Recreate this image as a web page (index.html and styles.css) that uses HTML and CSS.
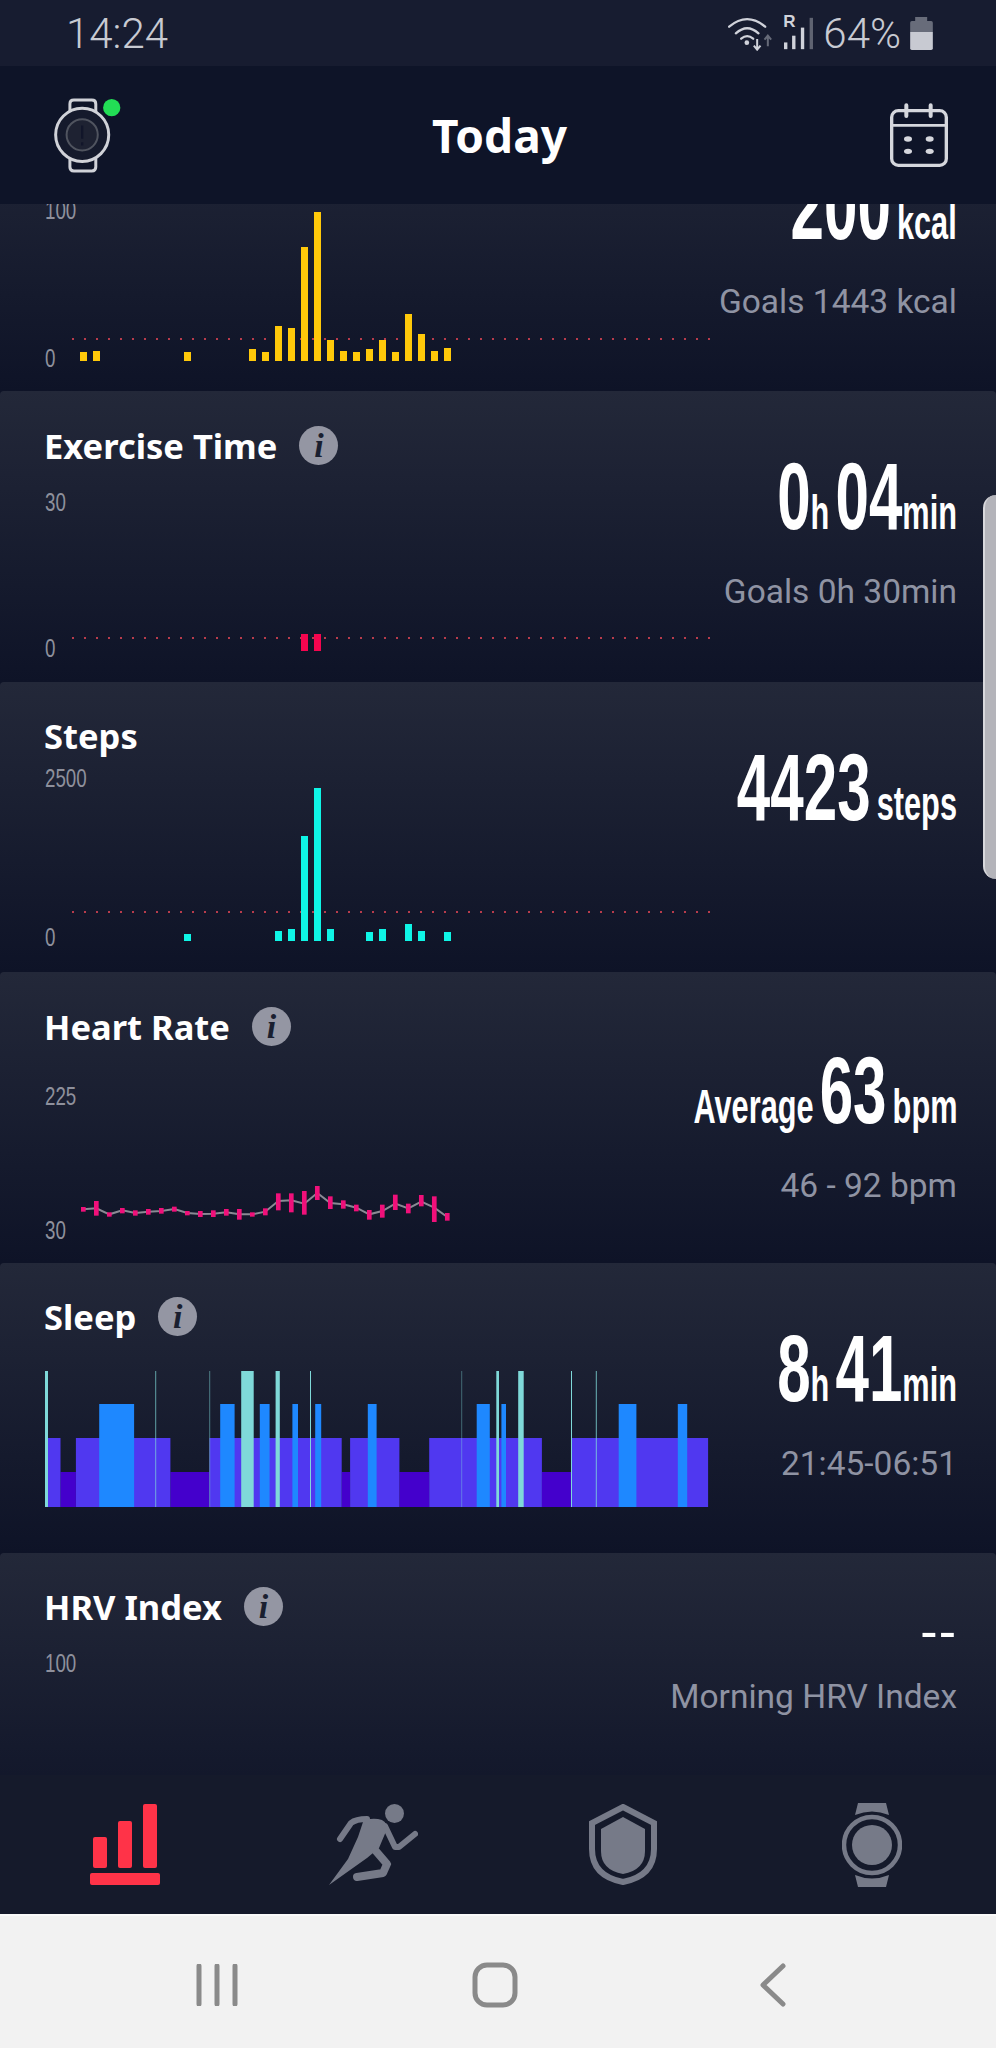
FILE: index.html
```html
<!DOCTYPE html>
<html lang="en">
<head>
  <meta charset="UTF-8" />
  <meta name="viewport" content="width=device-width, initial-scale=1.0" />
  <title>Today</title>
  <link rel="stylesheet" href="styles.css">
</head>
<body>
  <div class="app">
    <div class="status-bar">
      <span class="status-text">14:24</span>
      <div class="status-icons">
        <svg class="wifi-icon" viewBox="80 45 140 105">
          <g fill="none" stroke="#d0d2da" stroke-width="7" stroke-linecap="round">
            <path d="M86 77 Q140 32 194 77" />
            <path d="M106 97 Q140 66 174 97" />
            <path d="M122 113 Q140 98 158 113" />
          </g>
          <circle cx="139" cy="125" r="7" fill="#d0d2da" />
          <path d="M170 114 V144 M160 134 L170 146 L180 134" fill="none" stroke="#d0d2da" stroke-width="6" />
          <path d="M202 136 V108 M192 116 L202 104 L212 116" fill="none" stroke="#666a78" stroke-width="6" />
        </svg>
        <div class="signal">
          <span class="roaming">R</span>
          <svg class="signal-icon" viewBox="238 50 92 100">
            <rect x="241" y="128" width="10" height="20" fill="#d0d2da" />
            <rect x="265" y="108" width="10" height="40" fill="#d0d2da" />
            <rect x="291" y="84" width="10" height="64" fill="#d0d2da" />
            <rect x="317" y="55" width="10" height="93" fill="#5f6371" />
          </svg>
        </div>
        <span class="status-text">64%</span>
        <svg class="battery-icon" viewBox="625 50 68 99">
          <path d="M640 50 H676 V62 H688 Q693 62 693 67 V95 H625 V67 Q625 62 630 62 H640 Z" fill="#686c7a" />
          <path d="M625 95 H693 V144 Q693 149 688 149 H630 Q625 149 625 144 Z" fill="#c8cad2" />
        </svg>
      </div>
    </div>

    <div class="top-bar">
      <svg class="watch-icon" viewBox="90 70 220 250">
        <path d="M150 125 V100 Q150 88 162 88 H216 Q228 88 228 100 V125" fill="none" stroke="#d0d2d8" stroke-width="9" />
        <path d="M150 262 V290 Q150 302 162 302 H216 Q228 302 228 290 V262" fill="none" stroke="#d0d2d8" stroke-width="9" />
        <circle cx="187" cy="193" r="80" fill="#151a2c" stroke="#d0d2d8" stroke-width="9" />
        <circle cx="187" cy="193" r="47" fill="#1e2232" stroke="#50545f" stroke-width="6" />
        <path d="M187 165 V205 M187 215 V225" stroke="#12162a" stroke-width="7" />
        <circle cx="276" cy="111" r="26" fill="#22dd55" />
      </svg>
      <h1 class="page-title">Today</h1>
      <svg class="calendar-icon" viewBox="570 305 180 195">
        <rect x="578" y="328" width="164" height="164" rx="20" fill="none" stroke="#d5d7dd" stroke-width="10" />
        <path d="M578 372 H742" stroke="#d5d7dd" stroke-width="8" />
        <path d="M622 312 V344 M695 312 V344" stroke="#d5d7dd" stroke-width="12" stroke-linecap="round" />
        <ellipse cx="627" cy="413" rx="12" ry="8" fill="#d5d7dd" />
        <ellipse cx="692" cy="413" rx="12" ry="8" fill="#d5d7dd" />
        <ellipse cx="627" cy="450" rx="12" ry="8" fill="#d5d7dd" />
        <ellipse cx="692" cy="450" rx="12" ry="8" fill="#d5d7dd" />
      </svg>
    </div>

    <div class="scroll-area">
      <div class="cards">

        <!-- first card is scrolled under the header, its title is out of view -->
        <section class="card card-first">
          <div class="card-left">
            <div class="card-title"></div>
            <svg class="chart" viewBox="45 76 668 214">
              <text class="axis" x="45" y="118">100</text>
              <text class="axis" x="45" y="266">0</text>
              <line class="goal" x1="72" x2="710" y1="238" y2="238" />
              <g fill="#ffc90a">
                <rect x="80" y="251" width="7" height="9" />
                <rect x="93" y="250" width="7" height="10" />
                <rect x="184" y="251" width="7" height="9" />
                <rect x="249" y="248" width="7" height="12" />
                <rect x="262" y="251" width="7" height="9" />
                <rect x="275" y="225" width="7" height="35" />
                <rect x="288" y="227" width="7" height="33" />
                <rect x="301" y="146" width="7" height="114" />
                <rect x="314" y="111" width="7" height="149" />
                <rect x="327" y="239" width="7" height="21" />
                <rect x="340" y="250" width="7" height="10" />
                <rect x="353" y="251" width="7" height="9" />
                <rect x="366" y="248" width="7" height="12" />
                <rect x="379" y="239" width="7" height="21" />
                <rect x="392" y="251" width="7" height="9" />
                <rect x="405" y="213" width="7" height="47" />
                <rect x="418" y="233" width="7" height="27" />
                <rect x="431" y="250" width="7" height="10" />
                <rect x="444" y="247" width="7" height="13" />
              </g>
            </svg>
          </div>
          <div class="card-right">
            <div class="value"><span class="num">200</span> <span class="unit">kcal</span></div>
            <div class="sub">Goals 1443 kcal</div>
          </div>
        </section>

        <section class="card">
          <div class="card-left">
            <div class="card-title"><h2>Exercise Time</h2><span class="info">i</span></div>
            <svg class="chart" viewBox="45 76 668 214">
              <text class="axis" x="45" y="120">30</text>
              <text class="axis" x="45" y="266">0</text>
              <line class="goal" x1="72" x2="710" y1="247" y2="247" />
              <g fill="#f5054f">
                <rect x="301" y="243" width="7" height="17" />
                <rect x="314" y="243" width="7" height="17" />
              </g>
            </svg>
          </div>
          <div class="card-right">
            <div class="value"><span class="num">0</span><span class="unit">h</span> <span class="num">04</span><span class="unit">min</span></div>
            <div class="sub">Goals 0h 30min</div>
          </div>
        </section>

        <section class="card">
          <div class="card-left">
            <div class="card-title"><h2>Steps</h2></div>
            <svg class="chart" viewBox="45 76 668 214">
              <text class="axis" x="45" y="105">2500</text>
              <text class="axis" x="45" y="264">0</text>
              <line class="goal" x1="72" x2="710" y1="230" y2="230" />
              <g fill="#0ff5e6">
                <rect x="184" y="252" width="7" height="7" />
                <rect x="275" y="249" width="7" height="10" />
                <rect x="288" y="247" width="7" height="12" />
                <rect x="301" y="154" width="7" height="105" />
                <rect x="314" y="106" width="7" height="153" />
                <rect x="327" y="247" width="7" height="12" />
                <rect x="366" y="250" width="7" height="9" />
                <rect x="379" y="247" width="7" height="12" />
                <rect x="405" y="242" width="7" height="17" />
                <rect x="418" y="249" width="7" height="10" />
                <rect x="444" y="250" width="7" height="9" />
              </g>
            </svg>
          </div>
          <div class="card-right">
            <div class="value"><span class="num">4423</span> <span class="unit">steps</span></div>
          </div>
        </section>

        <section class="card">
          <div class="card-left">
            <div class="card-title"><h2>Heart Rate</h2><span class="info">i</span></div>
            <svg class="chart" viewBox="45 76 668 214">
              <text class="axis" x="45" y="133">225</text>
              <text class="axis" x="45" y="267">30</text>
              <!-- drawn at 3x, scaled down to the chart -->
              <g transform="translate(60 209) scale(0.3333)">
                <polyline class="hr-line" points="70,85 109,82 148,100 187,88 226,96 265,92 304,90 343,84 382,96 421,99 460,98 499,94 538,100 577,100 616,92 655,60 694,58 733,68 772,36 811,66 850,70 889,80 928,100 967,90 1006,68 1045,82 1084,62 1123,80 1162,108" />
                <g fill="#f0107a">
                  <rect x="63" y="78" width="14" height="14" />
                  <rect x="102" y="60" width="14" height="44" />
                  <rect x="141" y="94" width="14" height="13" />
                  <rect x="180" y="81" width="14" height="16" />
                  <rect x="219" y="88" width="14" height="16" />
                  <rect x="258" y="84" width="14" height="17" />
                  <rect x="297" y="81" width="14" height="17" />
                  <rect x="336" y="77" width="14" height="15" />
                  <rect x="375" y="90" width="14" height="13" />
                  <rect x="414" y="90" width="14" height="18" />
                  <rect x="453" y="88" width="14" height="20" />
                  <rect x="492" y="84" width="14" height="20" />
                  <rect x="531" y="84" width="14" height="32" />
                  <rect x="570" y="94" width="14" height="13" />
                  <rect x="609" y="82" width="14" height="21" />
                  <rect x="648" y="37" width="14" height="51" />
                  <rect x="687" y="37" width="14" height="57" />
                  <rect x="726" y="30" width="14" height="71" />
                  <rect x="765" y="15" width="14" height="42" />
                  <rect x="804" y="46" width="14" height="38" />
                  <rect x="843" y="58" width="14" height="25" />
                  <rect x="882" y="71" width="14" height="20" />
                  <rect x="921" y="87" width="14" height="29" />
                  <rect x="960" y="71" width="14" height="39" />
                  <rect x="999" y="41" width="14" height="46" />
                  <rect x="1038" y="68" width="14" height="29" />
                  <rect x="1077" y="42" width="14" height="34" />
                  <rect x="1116" y="46" width="14" height="77" />
                  <rect x="1155" y="96" width="14" height="23" />
                </g>
              </g>
            </svg>
          </div>
          <div class="card-right card-right-low">
            <div class="value"><span class="unit">Average</span> <span class="num">63</span> <span class="unit">bpm</span></div>
            <div class="sub">46 - 92 bpm</div>
          </div>
        </section>

        <section class="card">
          <div class="card-left">
            <div class="card-title"><h2>Sleep</h2><span class="info">i</span></div>
            <svg class="chart" viewBox="45 76 668 214">
              <g fill="#4400cc">
                <rect x="60.5" y="209" width="15.4" height="35" />
                <rect x="170.4" y="209" width="39.1" height="35" />
                <rect x="341.7" y="209" width="8.4" height="35" />
                <rect x="399.4" y="209" width="29.8" height="35" />
                <rect x="541.9" y="209" width="29.3" height="35" />
              </g>
              <g fill="#5038f0">
                <rect x="44.2" y="175" width="16.3" height="69" />
                <rect x="75.9" y="175" width="94.5" height="69" />
                <rect x="209.5" y="175" width="132.2" height="69" />
                <rect x="350.1" y="175" width="49.3" height="69" />
                <rect x="429.2" y="175" width="112.7" height="69" />
                <rect x="571.2" y="175" width="136.9" height="69" />
              </g>
              <g fill="#1e88ff">
                <rect x="99.2" y="141" width="34.9" height="103" />
                <rect x="220.2" y="141" width="14.4" height="103" />
                <rect x="259.8" y="141" width="9.8" height="103" />
                <rect x="292.4" y="141" width="5.6" height="103" />
                <rect x="315.2" y="141" width="6" height="103" />
                <rect x="367.8" y="141" width="8.8" height="103" />
                <rect x="476.7" y="141" width="13.1" height="103" />
                <rect x="501.4" y="141" width="4.6" height="103" />
                <rect x="618.7" y="141" width="17.7" height="103" />
                <rect x="677.8" y="141" width="9.4" height="103" />
              </g>
              <g fill="#7fd9d9">
                <rect x="44.2" y="108" width="3.8" height="136" />
                <rect x="241.2" y="108" width="12.5" height="136" />
                <rect x="275.6" y="108" width="4.2" height="136" />
                <rect x="496.3" y="108" width="2.7" height="136" />
                <rect x="518.2" y="108" width="5.5" height="136" />
                <rect x="155.2" y="108" width="1" height="136" opacity="0.7" />
                <rect x="209.2" y="108" width="1" height="136" opacity="0.5" />
                <rect x="310" y="108" width="1" height="136" />
                <rect x="461.2" y="108" width="1" height="136" opacity="0.4" />
                <rect x="571" y="108" width="1" height="136" />
                <rect x="595.8" y="108" width="1" height="136" opacity="0.8" />
              </g>
            </svg>
          </div>
          <div class="card-right">
            <div class="value"><span class="num">8</span><span class="unit">h</span> <span class="num">41</span><span class="unit">min</span></div>
            <div class="sub">21:45-06:51</div>
          </div>
        </section>

        <section class="card">
          <div class="card-left">
            <div class="card-title"><h2>HRV Index</h2><span class="info">i</span></div>
            <svg class="chart" viewBox="45 76 668 214">
              <text class="axis" x="45" y="119">100</text>
            </svg>
          </div>
          <div class="card-right card-right-empty">
            <div class="value value-small">--</div>
            <div class="sub">Morning HRV Index</div>
          </div>
        </section>

      </div>
      <div class="scroll-thumb"></div>
    </div>

    <nav class="tab-bar">
      <svg class="tab-icon" viewBox="0 0 70 81" width="70" height="81">
        <g fill="#ff3348">
          <rect x="3" y="33" width="14" height="31" rx="2" />
          <rect x="28" y="17" width="14" height="47" rx="2" />
          <rect x="53" y="0" width="14" height="64" rx="2" />
          <rect x="0" y="69" width="70" height="12" rx="2" />
        </g>
      </svg>
      <svg class="tab-icon" viewBox="0 0 89 81" width="89" height="81">
        <g fill="#767a88">
          <ellipse cx="65.5" cy="9.5" rx="9.5" ry="9.5" />
          <path d="M0 81 L19 55 L29 33 L34 18 Q38 14 49 15 Q58 16 58 25 L50 44 L38 54 Z" />
        </g>
        <g fill="none" stroke="#767a88" stroke-linejoin="round" stroke-linecap="round">
          <path d="M11 35 L22 19 Q27 15 38 15" stroke-width="6" />
          <path d="M46 46 L58 60 L54 69 L28 73" stroke-width="8" />
          <path d="M56 22 L66 43 L70 43 L86 30" stroke-width="6" />
        </g>
      </svg>
      <svg class="tab-icon" viewBox="0 0 68 81" width="68" height="81">
        <path d="M34 3 L65 19 V45 Q65 72 34 78 Q3 72 3 45 V19 Z" fill="none" stroke="#767a88" stroke-width="6" />
        <path d="M34 13 L56 25 V47 Q56 66 34 70 Q12 66 12 47 V25 Z" fill="#767a88" />
      </svg>
      <svg class="tab-icon" viewBox="0 0 60 84" width="60" height="84">
        <path d="M16 0 H44 L47 12 Q30 5 13 12 Z" fill="#767a88" />
        <path d="M13 72 Q30 79 47 72 L44 84 H16 Z" fill="#767a88" />
        <circle cx="30" cy="42" r="28" fill="none" stroke="#767a88" stroke-width="4.5" />
        <circle cx="30" cy="42" r="20" fill="#767a88" />
      </svg>
    </nav>

    <div class="system-bar">
      <svg viewBox="0 0 42 42" width="42" height="42">
        <path d="M3 2 V40 M21 2 V40 M39 2 V40" stroke="#8a8a8a" stroke-width="5" stroke-linecap="round" />
      </svg>
      <svg viewBox="0 0 46 46" width="46" height="46">
        <rect x="3" y="3" width="40" height="40" rx="12" fill="none" stroke="#8a8a8a" stroke-width="5" />
      </svg>
      <svg viewBox="0 0 26 44" width="26" height="44">
        <path d="M23 3 L3 22 L23 41" fill="none" stroke="#8a8a8a" stroke-width="5" stroke-linecap="round" stroke-linejoin="round" />
      </svg>
    </div>
  </div>
</body>
</html>
```

FILE: styles.css
```css
* {
  box-sizing: border-box;
}

html,
body {
  margin: 0;
  padding: 0;
  background-color: #0e1327;
}

.app {
  display: flex;
  flex-direction: column;
  width: 996px;
  height: 2048px;
  overflow: hidden;
  font-family: "Noto Sans", sans-serif;
}

/* status bar */
.status-bar {
  flex: 0 0 66px;
  display: flex;
  justify-content: space-between;
  align-items: center;
  padding: 0 63px 0 66px;
  background-color: #171c30;
}

.status-text {
  font-family: Roboto, sans-serif;
  font-size: 42px;
  font-weight: 300;
  color: #c8cad2;
}

.status-icons {
  display: flex;
  align-items: center;
  gap: 9px;
}

.wifi-icon {
  width: 47px;
  height: 35px;
}

.signal {
  position: relative;
  width: 31px;
  height: 34px;
}

.signal-icon {
  width: 31px;
  height: 34px;
}

.roaming {
  position: absolute;
  top: -4px;
  left: 0;
  font-family: "Liberation Sans", sans-serif;
  font-size: 17px;
  font-weight: 700;
  color: #d0d2da;
}

.battery-icon {
  width: 23px;
  height: 33px;
}

/* header */
.top-bar {
  flex: 0 0 138px;
  display: grid;
  grid-template-columns: 1fr auto 1fr;
  align-items: center;
  padding: 0 47px 0 50px;
  background-color: #0e1428;
}

.watch-icon {
  width: 73px;
  height: 83px;
}

.calendar-icon {
  justify-self: end;
  width: 60px;
  height: 65px;
}

.page-title {
  margin: 0;
  font-size: 46px;
  font-weight: 700;
  color: #fff;
}

/* cards */
.scroll-area {
  position: relative;
  flex: 0 0 1571px;
  overflow: hidden;
}

.card {
  display: flex;
  height: 290.4px;
  background: linear-gradient(#232839, #0e1327);
  border-radius: 4px 4px 0 0;
}

.card-first {
  margin-top: -103px;
}

.card-left {
  flex: 0 0 713px;
  padding-left: 45px;
}

.card-title {
  display: flex;
  align-items: center;
  gap: 22px;
  height: 44px;
  margin-top: 32px;
}

.card-title h2 {
  margin: 0 0 0 -1px;
  font-size: 34.5px;
  font-weight: 700;
  color: #fff;
}

.info {
  flex: 0 0 39px;
  height: 39px;
  border-radius: 50%;
  background-color: #9496a3;
  font-family: "Liberation Serif", serif;
  font-size: 34px;
  font-weight: 700;
  font-style: italic;
  line-height: 39px;
  text-align: center;
  color: #1a1f30;
}

.chart {
  display: block;
  width: 668px;
  height: 214px;
}

.axis {
  font-family: "Liberation Sans", sans-serif;
  font-size: 25px;
  fill: #8e909c;
  transform: scaleX(0.75);
  transform-box: fill-box;
  transform-origin: left;
}

.goal {
  stroke: #b83c4c;
  stroke-width: 2;
  stroke-dasharray: 2 10;
}

.hr-line {
  fill: none;
  stroke: #8a8a94;
  stroke-width: 6;
}

.card-right {
  flex: 1 1 0;
  min-width: 0;
  display: flex;
  flex-direction: column;
  align-items: flex-end;
  padding: 49px 39px 0 0;
}

.card-right-low {
  padding-top: 62px;
}

.card-right-empty {
  padding-top: 50px;
}

.value {
  height: 114px;
  white-space: nowrap;
  font-family: "Liberation Sans", sans-serif;
  font-size: 34px;
  font-weight: 700;
  line-height: 114px;
  color: #fff;
  transform: scaleX(0.64);
  transform-origin: right;
}

.value-small {
  height: 56px;
  font-size: 52px;
  font-weight: 400;
  letter-spacing: 1px;
  line-height: 56px;
  transform: none;
}

.num {
  font-size: 94px;
}

.unit {
  font-size: 48px;
}

.sub {
  margin-top: 18px;
  white-space: nowrap;
  font-family: Roboto, sans-serif;
  font-size: 33.5px;
  font-weight: 400;
  color: #8f93a3;
}

.scroll-thumb {
  position: absolute;
  top: 291px;
  right: 0;
  width: 13px;
  height: 384px;
  border-radius: 14px 0 0 14px;
  border-left: 2px solid #d8d8dc;
  background-color: #b4b4ba;
}

/* bottom tabs */
.tab-bar {
  flex: 0 0 139px;
  display: grid;
  grid-template-columns: repeat(4, 1fr);
  align-items: center;
  justify-items: center;
  background-color: #151a2b;
}

/* android nav */
.system-bar {
  flex: 0 0 134px;
  display: grid;
  grid-template-columns: repeat(3, 278px);
  align-items: center;
  justify-items: center;
  padding: 6px 0 0 78px;
  background-color: #f2f2f2;
  border-top: 2px solid #fafafa;
}
```
